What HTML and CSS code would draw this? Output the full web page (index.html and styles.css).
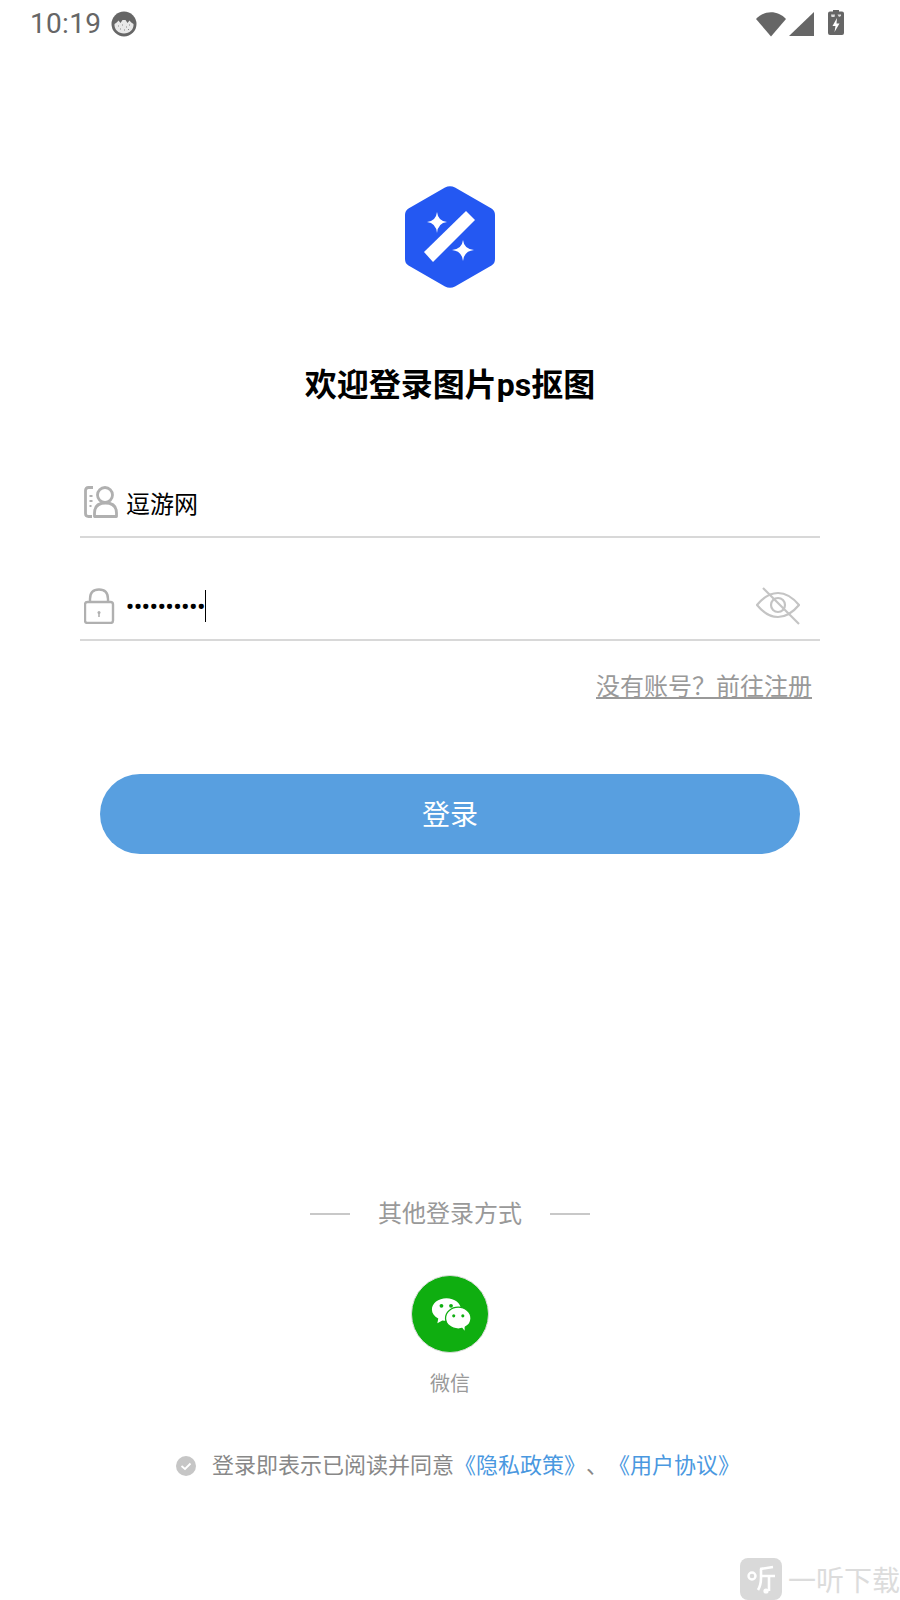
FILE: index.html
```html
<!DOCTYPE html>
<html>
<head lang="zh">
    <meta charset="UTF-8">
    <title>登录</title>
    <link rel="stylesheet" href="styles.css">
</head>
<body>
<div class="page">
    <div class="status">
        <div class="status-left">
            <span class="time">10:19</span>
            <svg class="face" width="26" height="26" viewBox="0 0 26 26">
                <circle cx="13" cy="13" r="12.500" fill="#666"/>
                <path d="M3.500 13 C5 12 6.500 11 7.500 9.500 L9.500 12 L11.500 9 L14.500 9 L16.500 12 L18.500 9.500 C19.500 11 21 12 22.500 13 C23 18.500 18.500 22.500 13 22.500 C7.500 22.500 3 18.500 3.500 13Z" fill="#e8e8e8"/>
                <path d="M7 15 H8 M11 14 H12 M15 16 H16 M18 14 H19 M9 18 H10 M13 19 H14 M17 18.500 H18" stroke="#888" stroke-width="1"/>
            </svg>
        </div>
        <div class="status-right">
            <svg class="wifi" width="30" height="26" viewBox="0 0 30 26"><path d="M0 8 C8 -1 22 -1 30 8 L15 25.500Z" fill="#666"/></svg>
            <svg class="signal" width="25" height="25" viewBox="0 0 25 25"><path d="M25 0 V24 H0Z" fill="#666"/></svg>
            <svg class="battery" width="16" height="26" viewBox="0 0 16 26">
                <path d="M5 0 H11 V1.500 H14 Q16 1.500 16 3.500 V23 Q16 25 14 25 H2 Q0 25 0 23 V3.500 Q0 1.500 2 1.500 H5Z" fill="#666"/>
                <path d="M9 8 L4.500 16 H7.500 L6.500 22 L11.500 13.500 H8.500Z" fill="#fff"/>
                <path d="M3 4.500 H7 L6.500 7 H3.500Z M9.500 4.500 H13 V6 L11 7Z" fill="#ddd"/>
            </svg>
        </div>
    </div>

    <div class="logo">
        <svg width="92" height="104" viewBox="0 0 92 104">
            <path d="M41 2.500 Q46 0 51 2.500 L87.500 23.500 Q91 25.500 91 30 V74 Q91 78.500 87.500 80.500 L51 101.500 Q46 104 41 101.500 L4.500 80.500 Q1 78.500 1 74 V30 Q1 25.500 4.500 23.500Z" fill="#2458f2"/>
            <path d="M62 26 L71 35 L29 77 L20 67Z" fill="#fff"/>
            <path d="M33 27 Q34 36 43 37 Q34 38 33 48 Q32 38 23 37 Q32 36 33 27Z" fill="#fff"/>
            <path d="M59 55 Q60 64 70 65 Q60 66 59 76 Q58 66 48 65 Q58 64 59 55Z" fill="#fff"/>
        </svg>
    </div>

    <h1 class="title">欢迎登录图片ps抠图</h1>

    <div class="form">
        <div class="field field-user">
            <svg class="field-icon" width="34" height="32" viewBox="0 0 34 32" fill="none" stroke="#b0b0b0" stroke-width="2.800">
                <path d="M9 1.500 H4.500 Q1.500 1.500 1.500 4.500 V27.500 Q1.500 30.500 4.500 30.500 H8"/>
                <path d="M5.500 10 H8.500 M5.500 15 H8.500 M5.500 20 H7.500" stroke-width="2"/>
                <circle cx="21" cy="9" r="7.500"/>
                <path d="M10.500 30.500 V27 Q10.500 17 21.500 17 Q32.500 17 32.500 27 V30.500Z" stroke-linejoin="round"/>
            </svg>
            <span class="field-text">逗游网</span>
        </div>
        <div class="field field-pass">
            <svg class="field-icon" width="34" height="36" viewBox="0 0 34 36" fill="none" stroke="#b0b0b0" stroke-width="2.400">
                <path d="M6 14 V11 Q6 1.500 15 1.500 Q24 1.500 24 11 V14"/>
                <rect x="1" y="14" width="28" height="21" rx="2.500"/>
                <path d="M15 25 V29" stroke-width="1.600"/>
                <circle cx="15" cy="24.500" r="1.500" fill="#b0b0b0" stroke="none"/>
            </svg>
            <span class="dots">••••••••••</span><span class="caret"></span>
            <svg class="eye" width="44" height="38" viewBox="0 0 44 38" fill="none" stroke="#c4c4c4" stroke-width="2.200">
                <path d="M1 18 Q11 6 22 6 Q33 6 43 18 Q33 30 22 30 Q11 30 1 18Z"/>
                <circle cx="22" cy="18" r="7"/>
                <path d="M7 1 L43 37"/>
            </svg>
        </div>
        <div class="register"><a class="register-link">没有账号？前往注册</a></div>
        <div class="login-btn">登录</div>
    </div>

    <div class="other">
        <div class="other-head">
            <span class="other-line"></span>
            <span class="other-text">其他登录方式</span>
            <span class="other-line"></span>
        </div>
        <div class="wechat">
            <svg class="wechat-icon" width="40" height="33" viewBox="0 0 44 36">
                <path d="M17 0 C26 0 33 5.500 33 12.500 C33 19.500 26 25 17 25 Q14.500 25 12.500 24.500 L7 27.500 L8 22.500 C3.500 20 1 16.500 1 12.500 C1 5.500 8 0 17 0Z" fill="#fff"/>
                <ellipse cx="30" cy="22" rx="14" ry="12" fill="#fff" stroke="#0fae10" stroke-width="1.400"/>
                <path d="M34 32 L37 36 L37 30Z" fill="#fff"/>
                <circle cx="11.500" cy="8.500" r="2.100" fill="#0fae10"/>
                <circle cx="22" cy="8.500" r="2.100" fill="#0fae10"/>
                <circle cx="25" cy="19.500" r="1.700" fill="#0fae10"/>
                <circle cx="35" cy="19.500" r="1.700" fill="#0fae10"/>
            </svg>
        </div>
        <div class="wechat-text">微信</div>
    </div>

    <div class="agree">
        <svg class="agree-check" width="20" height="20" viewBox="0 0 20 20">
            <circle cx="10" cy="10" r="10" fill="#c6c6c6"/>
            <path d="M5.500 10 L9 13 L14.500 7.500" fill="none" stroke="#fff" stroke-width="1.800"/>
        </svg>
        <span class="agree-text">登录即表示已阅读并同意<a class="agree-link">《隐私政策》</a>、<a class="agree-link">《用户协议》</a></span>
    </div>

    <div class="mark">
        <svg class="mark-logo" width="42" height="42" viewBox="0 0 42 42">
            <rect width="42" height="42" rx="8" fill="#d9d9d9"/>
            <circle cx="12" cy="18" r="3.500" fill="none" stroke="#fff" stroke-width="2.400"/>
            <path d="M20 11 L33 9 M21 11 V20 Q21 27 18 32 M21 18 H35 M29 18 V33" fill="none" stroke="#fff" stroke-width="2.600"/>
            <circle cx="26" cy="33" r="2.600" fill="#fff"/>
        </svg>
        <span class="mark-text">一听下载</span>
    </div>
</div>
</body>
</html>
```

FILE: styles.css
```css
*{
    margin:0;
    padding:0;
    box-sizing:border-box;
}
body{
    background:#fff;
    font-family:Roboto,"Noto Sans CJK SC",sans-serif;
}
.page{
    width:900px;
    height:1600px;
    position:relative;
    overflow:hidden;
    display:flex;
    flex-direction:column;
    align-items:center;
}
.status{
    width:100%;
    height:48px;
    padding:10px 56px 0 30px;
    display:flex;
    justify-content:space-between;
}
.status-left{
    display:flex;
    align-items:flex-start;
    gap:10px;
}
.time{
    font-size:28px;
    line-height:28px;
    letter-spacing:0.3px;
    color:#666;
}
.face{
    margin-top:1px;
}
.status-right{
    display:flex;
    align-items:flex-start;
    gap:3px;
    padding-top:1px;
}
.signal{
    margin-top:1px;
}
.battery{
    margin-left:11px;
    margin-top:-1px;
}
.logo{
    margin-top:137px;
    height:104px;
}
.title{
    margin-top:74px;
    font-size:32px;
    line-height:44px;
    font-weight:bold;
    color:#000;
}
.form{
    width:740px;
    margin-top:64px;
}
.field{
    border-bottom:2px solid #d8d8d8;
    display:flex;
    align-items:center;
    position:relative;
}
.field-user{
    height:67px;
}
.field-pass{
    margin-top:38px;
    height:65px;
}
.field-icon{
    margin:0 0 4px 4px;
    flex:none;
}
.field-text{
    margin:0 0 3px 8px;
    font-size:24px;
    color:#000;
}
.dots{
    margin:0 0 3px 8px;
    font-size:22px;
    color:#000;
    font-weight:bold;
}
.caret{
    width:1px;
    height:32px;
    margin-bottom:4px;
    background:#000;
}
.eye{
    margin:0 20px 4px auto;
}
.register{
    margin-top:31px;
    padding-right:8px;
    text-align:right;
    font-size:24px;
    line-height:30px;
}
.register-link{
    color:#999;
    text-decoration:underline;
}
.login-btn{
    width:700px;
    height:80px;
    margin:72px auto 0;
    border-radius:40px;
    background:#589fe0;
    color:#fff;
    font-size:28px;
    line-height:83px;
    text-align:center;
}
.other{
    margin-top:342px;
    display:flex;
    flex-direction:column;
    align-items:center;
}
.other-head{
    display:flex;
    align-items:center;
    gap:28px;
    color:#999;
    font-size:24px;
    line-height:36px;
}
.other-line{
    width:40px;
    height:2px;
    background:#c8c8c8;
}
.wechat{
    width:78px;
    height:78px;
    margin-top:43px;
    border-radius:50%;
    background:#0fae10;
    border:1px solid #ddd;
    display:flex;
    align-items:center;
    justify-content:center;
}
.wechat-icon{
    margin-left:2px;
}
.wechat-text{
    margin-top:16px;
    color:#999;
    font-size:20px;
    line-height:30px;
}
.agree{
    margin-top:51px;
    margin-left:16px;
    display:flex;
    align-items:center;
    gap:16px;
}
.agree-text{
    font-size:22px;
    line-height:32px;
    color:#888;
    text-spacing-trim:space-all;
}
.agree-link{
    color:#4a98e0;
}
.mark{
    position:absolute;
    right:0;
    bottom:0;
    width:160px;
    height:42px;
    display:flex;
    align-items:center;
}
.mark-logo{
    flex:none;
}
.mark-text{
    margin-left:6px;
    font-size:28px;
    white-space:nowrap;
    color:#dcdcdc;
}
```
